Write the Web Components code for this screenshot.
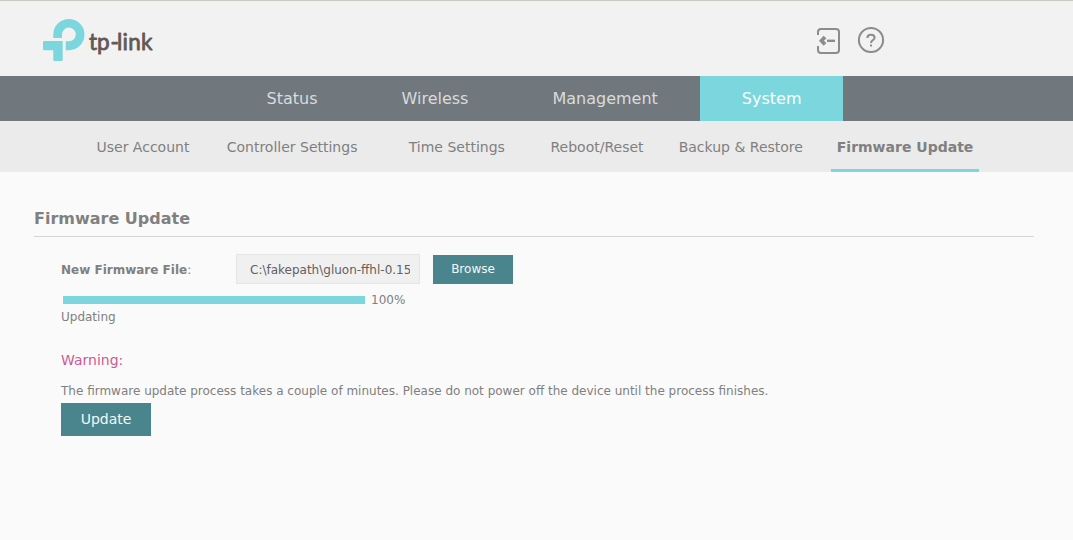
<!DOCTYPE html>
<html lang="en">
<head>
<meta charset="utf-8">
<title>Firmware Update</title>
<style>
html,body{margin:0;height:100%;background:#fafafa;overflow:hidden}
body{font:12px/16px "DejaVu Sans",sans-serif;color:#808080}
</style>
</head>
<body>
<router-page></router-page>
<script>
function define(name, html) {
  const t = document.createElement('template');
  t.innerHTML = html;
  customElements.define(name, class extends HTMLElement {
    constructor() {
      super();
      this.attachShadow({mode: 'open'}).append(t.content.cloneNode(true));
    }
  });
}

define('brand-logo', `<style>:host{display:block;width:116px;height:48px}svg{display:block}
text{font:400 22.5px Lato,sans-serif;fill:#625855;stroke:#625855;stroke-width:.8;stroke-linejoin:round}</style>
<svg width="116" height="48" viewBox="40 16 116 48">
<path fill="#7cd6dd" d="M53.3 38.1V34.6A15.6 15.6 0 1 1 69 50.2H65.7V41.3H69A6.9 6.9 0 1 0 62 34.6V38.1Z"/>
<path fill="#7cd6dd" d="M44.2 41H62.7V59.7a1.3 1.3 0 0 1-1.3 1.3H54.6a1.3 1.3 0 0 1-1.3-1.3V50.2H44.2a1.3 1.3 0 0 1-1.2-1.3V42.2a1.2 1.2 0 0 1 1.2-1.2Z"/>
<text x="89 96.9 110.5 117 122.6 128.2 140.9" y="50">tp-link</text></svg>`);

define('logout-icon', `<style>:host,svg{display:block}</style>
<svg width="26" height="28" viewBox="816 27 26 28" fill="none" stroke="#8c8c8c" stroke-width="2">
<path d="M818 35V32a3 3 0 0 1 3-3H836a3 3 0 0 1 3 3V50a3 3 0 0 1-3 3H821a3 3 0 0 1-3-3V46"/>
<path stroke-width="2.4" d="M827 40.8H835"/><path stroke-width="3.7" d="M825 37L821.5 40.8L825 44.6"/></svg>`);

define('help-icon', `<style>:host,svg{display:block}</style>
<svg width="28" height="28" viewBox="857 26 28 28" fill="none" stroke="#8c8c8c" stroke-width="2">
<circle cx="871" cy="40" r="12.1"/><path d="M867.4 37.9C867.4 35.7 868.8 34.7 871 34.7S874.6 35.9 874.6 37.7C874.6 40 871 40 871 43"/><path d="M871 44.6V46.6"/></svg>`);

define('top-bar', `<style>:host{display:flex;box-sizing:border-box;height:76px;background:#f2f2f2;border-top:1px solid #cac7c0;padding-left:40px;align-items:flex-start}
brand-logo{margin-top:15px}logout-icon{margin:26px 0 0 660px}help-icon{margin:25px 0 0 15px}</style>
<brand-logo></brand-logo><logout-icon></logout-icon><help-icon></help-icon>`);

define('nav-tab', `<style>:host{display:block;padding:0 42px;font-size:16px;line-height:45px;color:#d9dbdc}
:host([active]){background:#7cd6dd;color:#f8ffff;padding-right:41.4px}</style><slot></slot>`);
define('main-nav', `<style>:host{display:flex;height:45px;background:#70787e;padding-left:224.5px}</style><slot></slot>`);

define('sub-tab', `<style>:host{display:block;justify-self:start;box-sizing:border-box;height:51px;padding:0 6px;font-size:14px;line-height:52px;white-space:nowrap}
:host([active]){width:148px;font-weight:bold;border-bottom:3px solid #7cd6dd}</style><slot></slot>`);
define('sub-nav', `<style>:host{display:grid;grid-template-columns:130.2px 182px 141.8px 128.2px 158.1px 148px;height:51px;background:#ebebeb;padding-left:90.5px}</style><slot></slot>`);

define('section-title', `<style>:host{display:block;box-sizing:border-box;width:1000px;height:28px;font-size:16px;line-height:20px;font-weight:bold;border-bottom:1px solid #d5d5d5}</style><slot></slot>`);
define('file-field', `<style>:host{display:block;box-sizing:border-box;width:184px;height:30px;border:1px solid #e5e5e5;background:#f0f0f0;color:#606060;padding:1px 9px 0 13px;line-height:29px}
span{display:block;height:27px;overflow:hidden;white-space:nowrap}</style><span><slot></slot></span>`);
define('action-button', `<style>:host{display:block;width:80px;height:29px;line-height:28px;background:#4a858e;color:#f3f8f8;text-align:center}
:host([large]){width:90px;height:33px;font-size:14px;line-height:33px}</style><slot></slot>`);
define('progress-bar', `<style>:host{display:flex;align-items:center;gap:6px;height:16px;padding-left:2px}div{width:302px;height:8px;background:#7cd6dd}</style><div></div><slot></slot>`);
define('warning-note', `<style>:host{display:block}h3{margin:0 0 14px;font-size:14px;line-height:18px;font-weight:normal;color:#d05b91}p{margin:0;line-height:16px}</style><h3><slot name="title"></slot></h3><p><slot></slot></p>`);

define('firmware-panel', `<style>:host{display:block;padding:37px 0 0 34px}
.form{padding:17px 0 0 27px}.row{display:flex;align-items:flex-start}
.label{width:175px;line-height:32px}file-field{margin-right:13px}.row action-button{margin-top:1px}
progress-bar{margin-top:6px}.state{line-height:17px;padding-top:1px}warning-note{margin:25px 0 4px}</style>
<section-title>Firmware Update</section-title>
<div class="form"><div class="row"><div class="label"><b>New Firmware File</b>:</div><file-field>C:\\fakepath\\gluon-ffhl-0.15</file-field><action-button>Browse</action-button></div>
<progress-bar>100%</progress-bar><div class="state">Updating</div>
<warning-note><span slot="title">Warning:</span>The firmware update process takes a couple of minutes. Please do not power off the device until the process finishes.</warning-note>
<action-button large>Update</action-button></div>`);

define('router-page', `<style>:host{display:block}</style>
<top-bar></top-bar>
<main-nav><nav-tab>Status</nav-tab><nav-tab>Wireless</nav-tab><nav-tab>Management</nav-tab><nav-tab active>System</nav-tab></main-nav>
<sub-nav><sub-tab>User Account</sub-tab><sub-tab>Controller Settings</sub-tab><sub-tab>Time Settings</sub-tab><sub-tab>Reboot/Reset</sub-tab><sub-tab>Backup &amp; Restore</sub-tab><sub-tab active>Firmware Update</sub-tab></sub-nav>
<firmware-panel></firmware-panel>`);
</script>
</body>
</html>
